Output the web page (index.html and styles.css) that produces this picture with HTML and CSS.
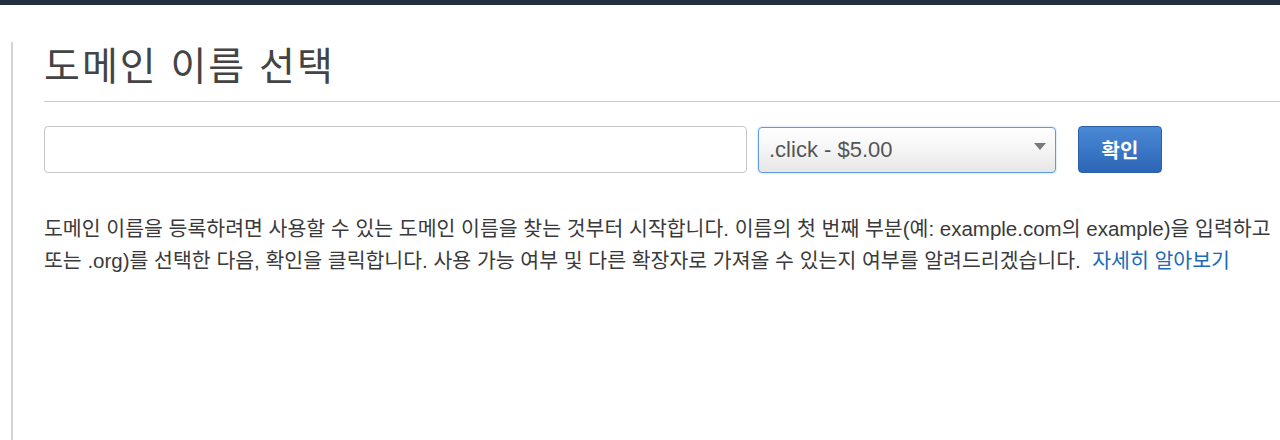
FILE: index.html
```html
<!DOCTYPE html>
<html lang="ko">
  <head>
    <meta charset="UTF-8" />
    <meta name="viewport" content="width=device-width, initial-scale=1.0" />
    <title>도메인 이름 선택</title>
    <link rel="stylesheet" href="styles.css">
  </head>
  <body>
    <div class="topbar"></div>
    <div class="page">
      <h1>도메인 이름 선택</h1>
      <div class="search-row">
        <input type="text" class="domain-input" />
        <span class="select-wrap">
          <select class="tld-select">
            <option>.click - $5.00</option>
            <option>.com - $12.00</option>
            <option>.net - $11.00</option>
            <option>.org - $12.00</option>
          </select>
        </span>
        <button class="check-btn">확인</button>
      </div>
      <p class="help">
        도메인 이름을 등록하려면 사용할 수 있는 도메인 이름을 찾는 것부터 시작합니다. 이름의 첫 번째 부분(예: example.com의 example)을 입력하고<br>
        또는 .org)를 선택한 다음, 확인을 클릭합니다. 사용 가능 여부 및 다른 확장자로 가져올 수 있는지 여부를 알려드리겠습니다.&nbsp; <a href="#">자세히 알아보기</a>
      </p>
    </div>
  </body>
</html>
```

FILE: styles.css
```css
body {
  margin: 0;
  font-family: "Liberation Sans", "Noto Sans CJK KR", sans-serif;
  color: #444;
  background: #fff;
  overflow: hidden;
}
.topbar {
  height: 5px;
  background: #232f3e;
}
.page {
  width: 1600px;
  min-height: 420px;
  margin: 37px 0 0 11px;
  padding-left: 31px;
  border-left: 2px solid #d2d2d2;
}
h1 {
  margin: 0;
  padding: 2px 0 11px;
  font-size: 39px;
  font-weight: normal;
  letter-spacing: 2px;
  line-height: 46px;
  color: #444;
  border-bottom: 1px solid #c8c8c8;
}
.search-row {
  display: flex;
  align-items: center;
  margin-top: 24px;
}
.domain-input {
  width: 703px;
  height: 47px;
  box-sizing: border-box;
  border: 1px solid #c6c6c6;
  border-radius: 4px;
  font-size: 20px;
  padding: 0 10px;
}
.select-wrap {
  position: relative;
  margin-left: 11px;
}
.select-wrap::after {
  content: "";
  position: absolute;
  right: 10px;
  top: 16px;
  border-left: 6px solid transparent;
  border-right: 6px solid transparent;
  border-top: 7px solid #7a7a7a;
  pointer-events: none;
}
.tld-select {
  appearance: none;
  -webkit-appearance: none;
  width: 298px;
  height: 46px;
  padding: 0 10px;
  border: 1px solid #5c9ae6;
  border-radius: 4px;
  box-shadow: 0 0 2px rgba(80, 140, 230, 0.5);
  background: linear-gradient(#ffffff, #f6f6f6 45%, #e6e6e6);
  font-family: "Liberation Sans", sans-serif;
  font-size: 22px;
  color: #555;
}
.check-btn {
  margin-left: 22px;
  width: 84px;
  height: 47px;
  border: 1px solid #2b5fa8;
  border-radius: 4px;
  background: linear-gradient(#4a89d6, #2c66b6);
  color: #fff;
  font-family: "Noto Sans CJK KR", sans-serif;
  font-size: 20px;
  font-weight: bold;
  cursor: pointer;
}
.help {
  margin: 40px 0 0;
  font-size: 20.5px;
  line-height: 32px;
  color: #3a3a3a;
  white-space: nowrap;
}
.help a {
  color: #1d6bb8;
  text-decoration: none;
}
```
